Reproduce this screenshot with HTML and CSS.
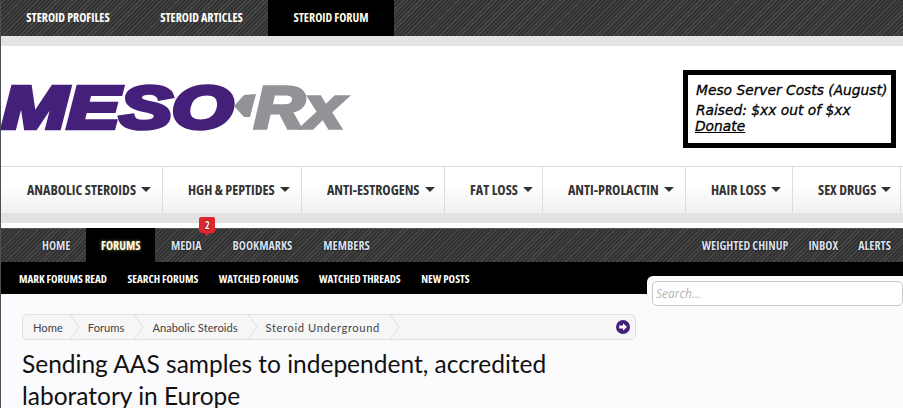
FILE: index.html
```html
<!DOCTYPE html>
<html lang="en">
<head>
<meta charset="UTF-8">
<meta name="viewport" content="width=device-width, initial-scale=1.0">
<title>Sending AAS samples to independent, accredited laboratory in Europe</title>
<link rel="stylesheet" href="styles.css">
</head>
<body>
<div class="topbar">
    <a class="top-link">Steroid Profiles</a>
    <a class="top-link">Steroid Articles</a>
    <a class="top-link active">Steroid Forum</a>
</div>
<div class="grey-strip"></div>
<header class="masthead">
    <svg class="logo" viewBox="0 0 352 72" xmlns="http://www.w3.org/2000/svg">
        <text class="logo-meso" x="1" y="55" textLength="231" lengthAdjust="spacingAndGlyphs">MESO</text>
        <polygon class="logo-arrow" points="233,33 243,22 255,21 249,44 243,44"/>
        <text class="logo-rx" x="253" y="55" textLength="90" lengthAdjust="spacingAndGlyphs">Rx</text>
    </svg>
    <div class="donate-box">
        <p>Meso Server Costs (August)</p>
        <p class="raised">Raised: $xx out of $xx</p>
        <a>Donate</a>
    </div>
</header>
<nav class="cat-nav">
    <a class="cat w1">Anabolic Steroids<i></i></a>
    <a class="cat w2">HGH &amp; Peptides<i></i></a>
    <a class="cat w3">Anti-Estrogens<i></i></a>
    <a class="cat w4">Fat Loss<i></i></a>
    <a class="cat w5">Anti-Prolactin<i></i></a>
    <a class="cat w6">Hair Loss<i></i></a>
    <a class="cat w7">Sex Drugs<i></i></a>
</nav>
<div class="grey-strip thin"></div>
<nav class="forum-nav">
    <div class="tabs">
        <a class="tab">Home</a>
        <a class="tab active">Forums</a>
        <a class="tab">Media<span class="badge">2</span></a>
        <a class="tab">Bookmarks</a>
        <a class="tab">Members</a>
    </div>
    <div class="tabs">
        <a class="tab slim">Weighted Chinup</a>
        <a class="tab slim">Inbox</a>
        <a class="tab slim">Alerts</a>
    </div>
</nav>
<div class="sub-nav">
    <a>Mark Forums Read</a>
    <a>Search Forums</a>
    <a>Watched Forums</a>
    <a>Watched Threads</a>
    <a>New Posts</a>
</div>
<main class="content">
    <div class="main-col">
        <div class="crumbs">
            <a class="crumb">Home</a>
            <a class="crumb">Forums</a>
            <a class="crumb">Anabolic Steroids</a>
            <a class="crumb">Steroid Underground</a>
            <svg class="jump" viewBox="0 0 14 14" xmlns="http://www.w3.org/2000/svg">
                <circle cx="7" cy="7" r="7" fill="#45207a"/>
                <path d="M3.2 5.6 H7 V3.2 L11 7 L7 10.8 V8.4 H3.2 Z" fill="#fff"/>
            </svg>
        </div>
        <h1>Sending AAS samples to independent, accredited laboratory in Europe</h1>
    </div>
    <aside class="sidebar">
        <input class="search" type="text" placeholder="Search...">
    </aside>
</main>
</body>
</html>
```

FILE: styles.css
```css
html, body {
    height: 408px;
    margin: 0;
    padding: 0;
    overflow: hidden;
    background: #fff;
}
body {
    border-left: 1px solid #4a5058;
    font-family: "Open Sans", sans-serif;
}
a {
    color: inherit;
    text-decoration: none;
}
.topbar {
    height: 36px;
    display: flex;
    background: repeating-linear-gradient(135deg, #333 0 2px, #4a4a4a 2px 3px);
}
.top-link {
    display: flex;
    align-items: center;
    justify-content: center;
    box-sizing: border-box;
    height: 36px;
    padding-bottom: 2px;
    color: #fff;
    font-size: 12px;
    font-weight: 700;
    font-stretch: 75%;
    text-transform: uppercase;
}
.top-link:nth-child(1) { width: 134px; }
.top-link:nth-child(2) { width: 133px; }
.top-link.active {
    width: 126px;
    background: #000;
    color: #fffbe0;
}
.grey-strip {
    height: 10px;
    background: #e4e4e4;
}
.grey-strip.thin {
    background: #e2e2e2;
    margin-bottom: 5px;
}
.masthead {
    height: 121px;
    display: flex;
    justify-content: space-between;
    box-sizing: border-box;
    padding: 24px 7px 0 0;
    border-bottom: 1px solid #ddd;
}
.logo {
    width: 352px;
    height: 72px;
    margin-top: 3px;
}
.logo-meso, .logo-rx {
    font-family: "Liberation Sans", sans-serif;
    font-size: 60px;
    font-weight: 700;
    font-style: italic;
}
.logo-meso {
    fill: #45207a;
    stroke: #45207a;
    stroke-width: 4.5px;
}
.logo-rx {
    fill: #929397;
    stroke: #929397;
    stroke-width: 3.5px;
}
.logo-arrow {
    fill: #929397;
}
.donate-box {
    width: 213px;
    height: 78px;
    box-sizing: border-box;
    border: 5px solid #000;
    padding: 7px 0 0 8px;
    font-family: "DejaVu Sans", sans-serif;
    font-size: 13.8px;
    font-style: italic;
    line-height: 16px;
    color: #000;
    white-space: nowrap;
    -webkit-text-stroke: 0.3px #000;
}
.donate-box p {
    margin: 0;
}
.donate-box .raised {
    margin-top: 4px;
}
.donate-box a {
    display: block;
    text-decoration: underline;
    margin-left: -1px;
}
.cat-nav {
    height: 46px;
    display: flex;
    padding-left: 1px;
    background: linear-gradient(#fff 40%, #f0f0f0);
}
.cat {
    display: flex;
    align-items: center;
    gap: 5px;
    box-sizing: border-box;
    padding: 0 0 2px 25px;
    border-right: 1px solid #ddd;
    color: #333;
    font-size: 14px;
    font-weight: 700;
    font-stretch: 75%;
    text-transform: uppercase;
    white-space: nowrap;
}
.cat i {
    border: 5px solid transparent;
    border-top-color: #333;
    border-bottom: 0;
}
.w1 { width: 161px; }
.w2 { width: 139px; }
.w3 { width: 143px; }
.w4 { width: 98px; }
.w5 { width: 143px; }
.w6 { width: 107px; }
.w7 { width: 108px; }
.forum-nav {
    height: 34px;
    display: flex;
    justify-content: space-between;
    background: repeating-linear-gradient(135deg, #333 0 2px, #484848 2px 3px);
    border-top: 1px solid #555;
    box-sizing: border-box;
}
.tabs {
    display: flex;
}
.tab {
    position: relative;
    display: flex;
    align-items: center;
    padding: 0 15.5px;
    height: 33px;
    color: #d7dfe8;
    font-size: 12px;
    font-weight: 700;
    font-stretch: 75%;
    text-transform: uppercase;
    text-shadow: 0 0 2px #000;
}
.tab:first-child {
    padding-left: 41px;
}
.tab.active {
    margin-top: -1px;
    height: 34px;
    padding: 0 15px;
    background: #000;
    color: #fffbe0;
    text-shadow: 0 0 3px #a89c60;
}
.tab.slim {
    padding: 0 10px;
}
.tabs:last-child .tab:last-child {
    padding-right: 12px;
}
.badge {
    position: absolute;
    top: -12px;
    left: 44px;
    width: 16px;
    height: 16px;
    border-radius: 2px;
    background: #e0262f;
    color: #fff;
    font-size: 10px;
    line-height: 16px;
    text-align: center;
}
.badge::after {
    content: "";
    position: absolute;
    left: 5px;
    top: 16px;
    border: 3px solid transparent;
    border-top-color: #e0262f;
    border-bottom: 0;
}
.sub-nav {
    height: 32px;
    display: flex;
    align-items: center;
    gap: 20.5px;
    padding-left: 18px;
    background: #000;
    color: #fff;
    font-size: 11px;
    font-weight: 700;
    font-stretch: 75%;
    text-transform: uppercase;
}
.content {
    height: 114px;
    display: flex;
    background: #fbfbfe;
}
.main-col {
    width: 614px;
    padding: 20px 0 0 21px;
}
.crumbs {
    position: relative;
    display: flex;
    height: 24px;
    border: 1px solid #e0e0e0;
    border-radius: 5px;
    background: #f6f6f6;
    overflow: hidden;
    font-family: "Lato", sans-serif;
    font-size: 11.2px;
    color: #444;
}
.crumb {
    position: relative;
    display: flex;
    align-items: center;
    padding: 0 21px 0 7px;
}
.crumb:first-child {
    padding: 0 18px 0 10px;
}
.crumb:last-of-type {
    letter-spacing: 0.6px;
}
.crumb::after {
    content: "";
    position: absolute;
    right: 3px;
    top: 3px;
    width: 17px;
    height: 17px;
    border-top: 1px solid #e2e2e2;
    border-right: 1px solid #e2e2e2;
    transform: rotate(45deg) skew(10deg, 10deg);
}
.jump {
    position: absolute;
    right: 5px;
    top: 5px;
    width: 14px;
    height: 14px;
}
h1 {
    margin: 8px 0 0;
    font-family: "Lato", sans-serif;
    font-size: 24.5px;
    font-weight: 400;
    line-height: 32px;
    color: #111;
}
.sidebar {
    flex: 1;
    margin: -18px 0 0 11px;
    padding: 5px 0 0 5px;
    background: #fbfbfe;
    border-top-left-radius: 6px;
}
.search {
    display: block;
    width: 100%;
    height: 25px;
    box-sizing: border-box;
    padding: 0 3px;
    border: 1px solid #c8c8c8;
    border-radius: 5px;
    font-family: "Open Sans", sans-serif;
    font-size: 12px;
    font-style: italic;
}
.search::placeholder {
    color: #b4b4b4;
}
```
